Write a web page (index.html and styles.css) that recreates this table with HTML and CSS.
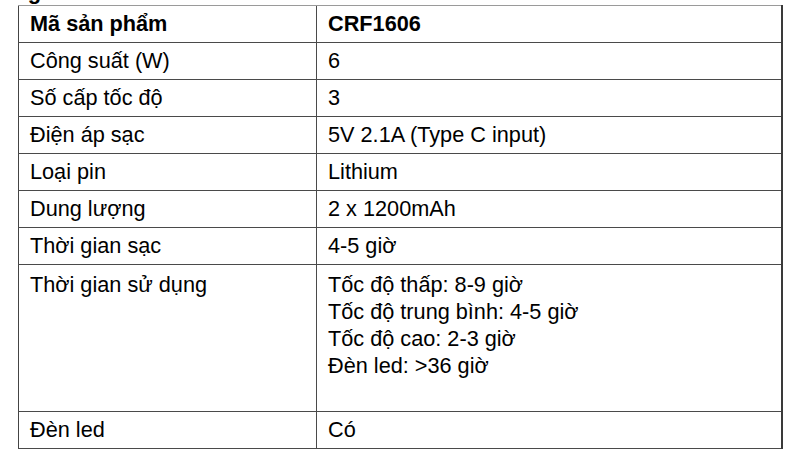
FILE: index.html
```html
<!DOCTYPE html>
<html lang="vi">
<head>
<meta charset="utf-8">
<title>Thông số</title>
<link rel="stylesheet" href="styles.css">
</head>
<body>
<div class="page">
  <h2 class="heading">Thông số</h2>
  <table class="spec">
    <colgroup><col class="c1"><col class="c2"></colgroup>
    <tr class="head"><td>Mã sản phẩm</td><td>CRF1606</td></tr>
    <tr><td>Công suất (W)</td><td>6</td></tr>
    <tr><td>Số cấp tốc độ</td><td>3</td></tr>
    <tr><td>Điện áp sạc</td><td>5V 2.1A (Type C input)</td></tr>
    <tr><td>Loại pin</td><td>Lithium</td></tr>
    <tr><td>Dung lượng</td><td>2 x 1200mAh</td></tr>
    <tr><td>Thời gian sạc</td><td>4-5 giờ</td></tr>
    <tr class="multi">
      <td class="top">Thời gian sử dụng</td>
      <td class="top lines">
        <div class="ln">Tốc độ thấp: 8-9 giờ</div>
        <div class="ln">Tốc độ trung bình: 4-5 giờ</div>
        <div class="ln">Tốc độ cao: 2-3 giờ</div>
        <div class="ln">Đèn led: &gt;36 giờ</div>
      </td>
    </tr>
    <tr><td>Đèn led</td><td>Có</td></tr>
  </table>
</div>
</body>
</html>
```
FILE: styles.css
```css
html, body {
  margin: 0;
  padding: 0;
  background: #ffffff;
}
body {
  font-family: "Liberation Sans", Arial, sans-serif;
  color: #000000;
}
.page {
  padding-left: 18px;
  overflow: hidden;
  height: 454px;
}
.heading {
  margin: -20px 0 1px -44px;
  font-size: 22px;
  line-height: 24px;
  font-weight: bold;
  color: #000;
}
.spec {
  border-collapse: collapse;
  width: 765px;
  table-layout: fixed;
  font-size: 21.7px;
  line-height: 24px;
  border-top: 1px solid #9a9a9a;
  border-left: 1px solid #444;
  border-right: 2px solid #3a3a3a;
  border-bottom: 1px solid #3a3a3a;
}
.c1 { width: 298px; }
.spec td {
  border-top: 1px solid #4a4a4a;
  border-bottom: 1px solid #4a4a4a;
  border-left: 1px solid #4a4a4a;
  padding: 6px 11px;
  height: 24px;
  vertical-align: middle;
  white-space: nowrap;
}
.spec tr:first-child td { border-top-color: #9a9a9a; }
.spec td:first-child { border-left-color: #444; }
.head td { font-weight: bold; }
.spec td.top { vertical-align: top; }
.spec td.lines {
  padding-top: 6px;
  padding-bottom: 32px;
}
.ln {
  line-height: 27px;
}
.multi td.top:first-child {
  line-height: 27px;
}
```
